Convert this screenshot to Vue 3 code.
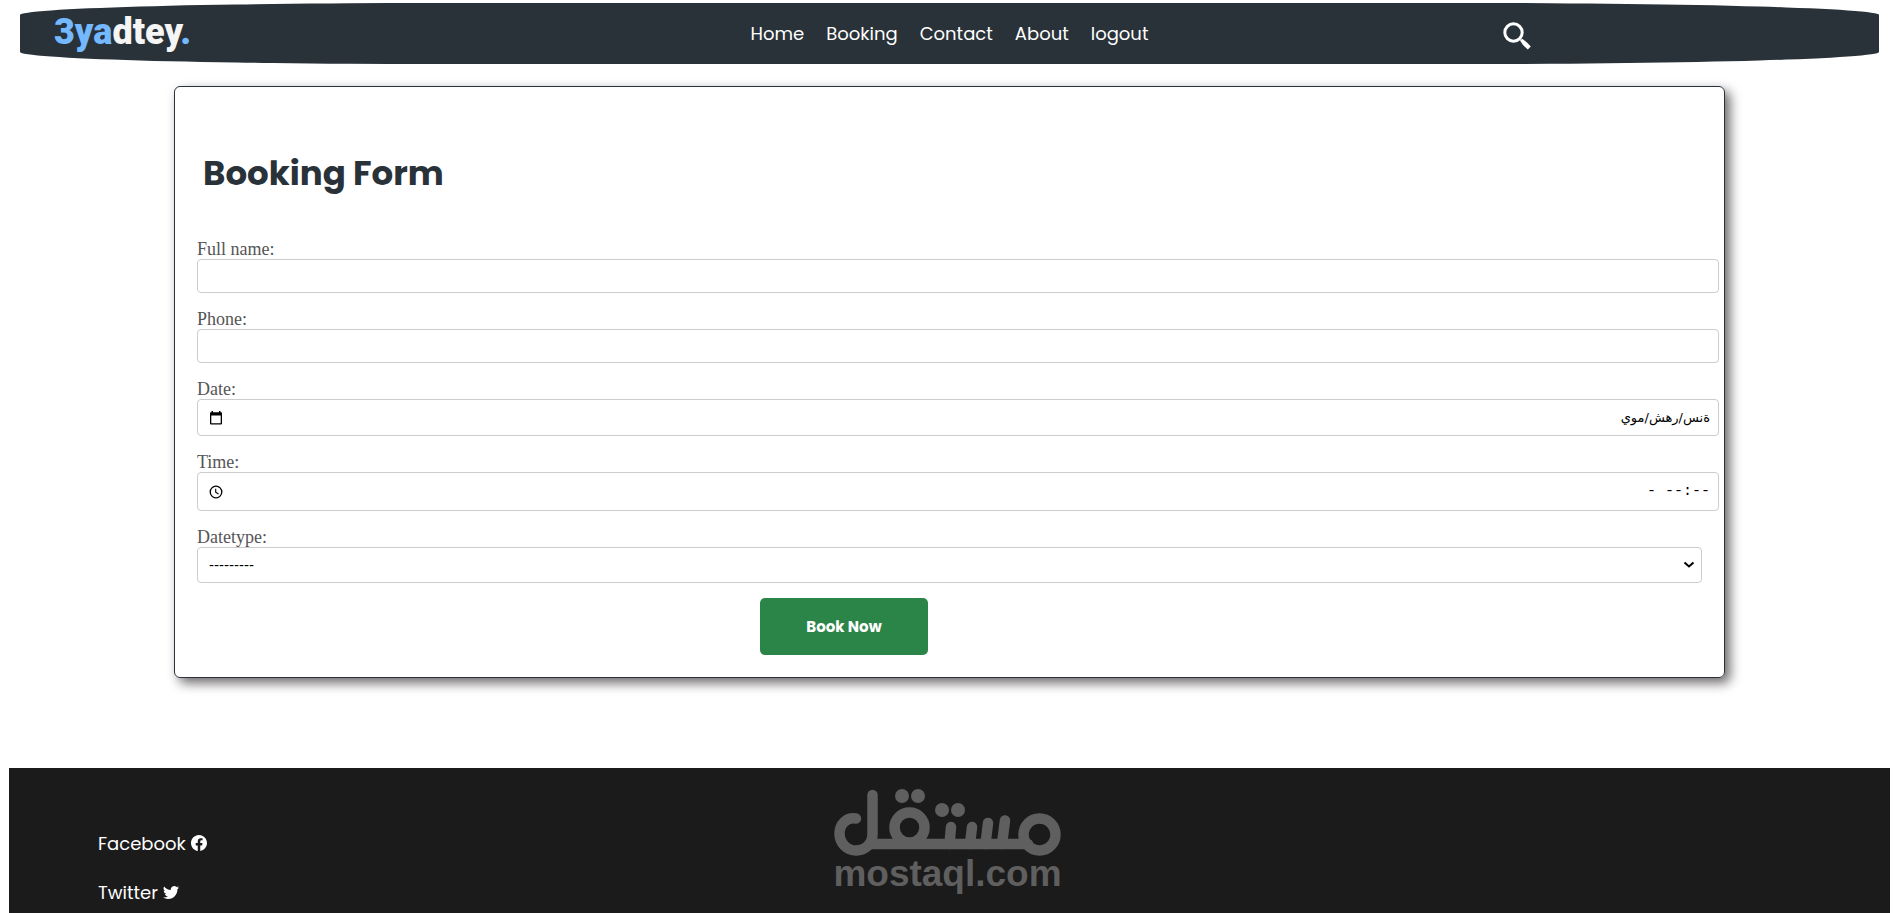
<script setup>
const links = ['Home', 'Booking', 'Contact', 'About', 'logout']
</script>

<template>
  <div class="page">
    <header class="bar">
      <a class="brand" href="#"><span>3ya</span>dtey<span>.</span></a>
      <nav class="nav">
        <a v-for="l in links" :key="l" href="#">{{ l }}</a>
      </nav>
      <button class="search" type="button" aria-label="Search">
        <svg viewBox="0 0 28 28" width="28" height="28">
          <circle cx="10.500" cy="10.500" r="8.700" fill="none" stroke="#fff" stroke-width="3" />
          <path d="M17 18.500L19.200 16.700Q24 20 27.800 24.500L24.800 27.500Q20 24 17 18.500z" fill="#fff" />
        </svg>
      </button>
    </header>

    <main class="card">
      <h1>Booking Form</h1>
      <form @submit.prevent>
        <label for="name">Full name:</label>
        <input id="name" class="box" type="text">
        <label for="phone">Phone:</label>
        <input id="phone" class="box" type="text">
        <label for="date">Date:</label>
        <div class="box picker date">
          <svg viewBox="0 0 14 14" width="14" height="14">
            <path d="M2.5 0h1.5v1.2h6V0h1.5v1.2H12q1 0 1 1V12.500q0 1-1 1H2q-1 0-1-1V2.200q0-1 1-1h.5zM2.300 4.500V12.200H11.700V4.500z" fill="#000" fill-rule="evenodd" />
          </svg>
          <input id="date" type="text" dir="rtl" value="ةنس/رهش/موي">
        </div>
        <label for="time">Time:</label>
        <div class="box picker time">
          <svg viewBox="0 0 14 14" width="14" height="14">
            <circle cx="7" cy="7" r="5.800" fill="none" stroke="#000" stroke-width="1.300" />
            <path d="M6.700 3.700V7.300L9.500 9" fill="none" stroke="#000" stroke-width="1.100" />
          </svg>
          <input id="time" type="text" value="- --:--">
        </div>
        <label for="type">Datetype:</label>
        <div class="choice">
          <select id="type" class="box"><option>---------</option></select>
          <svg viewBox="0 0 12 8" width="12" height="8"><path d="M1.500 1.500L6 5.500l4.500-4" fill="none" stroke="#000" stroke-width="2" /></svg>
        </div>
        <button class="submit" type="submit">Book Now</button>
      </form>
    </main>

    <footer class="foot">
      <ul>
        <li>
          <a href="#">Facebook
            <svg viewBox="0 0 16 16" width="16" height="16"><path fill="#fff" d="M16 8.049c0-4.446-3.582-8.050-8-8.050C3.580 0-.002 3.603-.002 8.050c0 4.017 2.926 7.347 6.750 7.951v-5.625h-2.030V8.050H6.750V6.275c0-2.017 1.195-3.131 3.022-3.131.876 0 1.791.157 1.791.157v1.980h-1.009c-.993 0-1.303.621-1.303 1.258v1.510h2.218l-.354 2.326H9.250V16c3.824-.604 6.750-3.934 6.750-7.951z" /></svg>
          </a>
        </li>
        <li>
          <a href="#">Twitter
            <svg viewBox="0 0 16 16" width="16" height="16"><path fill="#fff" d="M5.026 15c6.038 0 9.341-5.003 9.341-9.334 0-.14 0-.282-.006-.422A6.685 6.685 0 0 0 16 3.542a6.658 6.658 0 0 1-1.889.518 3.301 3.301 0 0 0 1.447-1.817 6.533 6.533 0 0 1-2.087.793A3.286 3.286 0 0 0 7.875 6.030a9.325 9.325 0 0 1-6.767-3.429 3.289 3.289 0 0 0 1.018 4.382A3.323 3.323 0 0 1 .640 6.575v.045a3.288 3.288 0 0 0 2.632 3.218 3.203 3.203 0 0 1-.865.115 3.230 3.230 0 0 1-.614-.057 3.283 3.283 0 0 0 3.067 2.277A6.588 6.588 0 0 1 .780 13.580a6.320 6.320 0 0 1-.780-.045A9.344 9.344 0 0 0 5.026 15z" /></svg>
          </a>
        </li>
      </ul>
      <div class="mark">
        <svg viewBox="0 0 228 68" width="228" height="68" role="img" aria-label="مستقل">
          <g fill="none" stroke="#5f5f5f" stroke-width="10.500" stroke-linecap="round">
            <path d="M22 29.500C12 28 5.500 36 5.500 44.500C5.500 54 13 61.500 22 61.500C31 61.500 38.500 55 38.500 45V6" />
            <path d="M36 55H194" />
            <circle cx="75.500" cy="38.500" r="15" />
            <circle cx="205.500" cy="45.500" r="16" />
            <path d="M115.500 55L117 38M136 55L138 38M151.500 55L154 34M168 55L171 31.500" />
          </g>
          <g fill="#5f5f5f">
            <circle cx="68" cy="7" r="7" /><circle cx="84" cy="7" r="7" />
            <circle cx="108" cy="21" r="7" /><circle cx="124" cy="21" r="7" />
          </g>
        </svg>
        <span>mostaql.com</span>
      </div>
    </footer>
  </div>
</template>

<style>
body { background: #fff; overflow: hidden; }
</style>

<style scoped>
.page { height: 100vh; overflow: hidden; display: flex; flex-direction: column; padding: 3px 5px 0 9px; box-sizing: border-box; font-family: Poppins, "Open Sans", sans-serif; }
a { color: #fff; text-decoration: none; }
.bar { flex: none; height: 61px; margin: 0 11px; padding: 0 34px; box-sizing: border-box; background: #2a3239; border-radius: 22% / 12px; display: grid; grid-template-columns: 1fr auto 1fr; align-items: center; }
.brand { font-family: Roboto, sans-serif; font-weight: 900; font-size: 36px; line-height: 40px; padding-bottom: 4px; color: #f5f5f5; }
.brand span { color: #74b9ff; }
.nav { display: flex; gap: 22px; font-size: 18px; line-height: 28px; }
.search { justify-self: center; width: 28px; height: 28px; margin: 4px 0 0 40px; padding: 0; border: 0; background: none; }
.search svg { display: block; }
.card { flex: none; margin: 22px 165px 0; padding: 61px 5px 22px 22px; border: 1px solid #2a3239; border-radius: 6px; box-shadow: 5px 5px 12px #6c6869; }
h1 { margin: 0 0 41px 6px; font-weight: 700; font-size: 34px; line-height: 50px; color: #2a3239; }
form { display: flex; flex-direction: column; font-family: "Liberation Serif", serif; }
label { font-size: 18px; line-height: 20px; color: #555; }
.box { width: 100%; box-sizing: border-box; height: 34px; margin: 0 0 16px; padding: 0 8px 0 11px; border: 1px solid #ccc; border-radius: 4px; background: #fff; }
.picker { display: flex; align-items: center; justify-content: space-between; }
.picker input { border: 0; padding: 0; width: 200px; background: none; outline: 0; color: #000; font: 13px/18px "DejaVu Sans", sans-serif; }
.date { height: 37px; }
.time { height: 39px; }
.picker.time input { text-align: right; font: 15px/18px "Liberation Mono", monospace; }
.choice { display: grid; align-items: center; margin-right: 17px; margin-bottom: 15px; }
.choice > * { grid-area: 1 / 1; }
.choice select { appearance: none; height: 36px; margin: 0; font: 15px/18px "Liberation Sans", sans-serif; color: #000; }
.choice svg { justify-self: end; margin-right: 7px; pointer-events: none; }
.submit { width: 168px; height: 57px; margin-left: 563px; border: 0; border-radius: 5px; background: #2b8548; color: #fff; font: 700 15px/20px Poppins, "Open Sans", sans-serif; }
.foot { flex: 1 0 144px; margin-top: 90px; background: #1b1b1b; display: grid; grid-template-columns: 1fr auto 1fr; }
ul { list-style: none; margin: 0; padding: 62px 0 0 89px; font-size: 18px; line-height: 27px; }
li { margin-bottom: 22px; }
li svg { vertical-align: -1px; }
.mark { padding: 21px 4px 0 0; color: #5f5f5f; display: flex; flex-direction: column; align-items: center; }
.mark svg { display: block; overflow: visible; }
.mark span { font: 700 37px/34px "Liberation Sans", sans-serif; }
</style>
